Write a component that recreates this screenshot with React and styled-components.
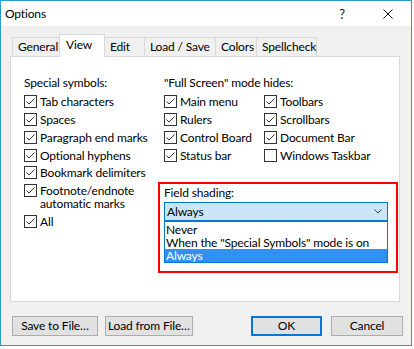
import React from 'react';
import styled, { createGlobalStyle, css } from 'styled-components';

const Global = createGlobalStyle`
  html, body { margin: 0; padding: 0; background: #fff; }
  body { font-family: Lato, "Liberation Sans", sans-serif; font-size: 12px; letter-spacing: -0.15px; color: #000; }
  * { box-sizing: border-box; }
`;

const Window = styled.div`
  width: 412px;
  height: 346px;
  border: 1px solid #2b9bc8;
  display: flex;
  flex-direction: column;
  background: #f0f0f0;
`;

const TitleBar = styled.div`
  height: 25px;
  background: #fff;
  display: flex;
  align-items: center;
  padding-left: 4px;
`;

const Title = styled.div`
  flex: 1;
  line-height: 16px;
`;

const TitleButton = styled.div`
  width: 46px;
  height: 25px;
  display: flex;
  align-items: center;
  justify-content: center;
  font-size: 13px;
  color: #111;
`;

const Body = styled.div`
  flex: 1;
  padding: 8px 11px 0 9px;
  display: flex;
  flex-direction: column;
`;

const TabStrip = styled.div`
  display: flex;
  align-items: flex-end;
  height: 22px;
  padding-left: 2px;
`;

const Tab = styled.div`
  width: ${p => p.w}px;
  height: 19px;
  border-left: 1px solid #d9d9d9;
  border-top: 1px solid #d9d9d9;
  ${p => p.last && css`border-right: 1px solid #d9d9d9;`}
  background: #f0f0f0;
  padding: 1px 0 0 5px;
  line-height: 16px;
  white-space: nowrap;
  ${p => p.active && css`
    position: relative;
    z-index: 1;
    height: 23px;
    margin: 0 -1px -1px -2px;
    border-right: 1px solid #d9d9d9;
    background: #fff;
    padding: 2px 0 0 6px;
  `}
`;

const Panel = styled.div`
  height: 246px;
  background: #fff;
  border: 1px solid #d9d9d9;
  padding: 18px 0 0 13px;
  display: grid;
  grid-template-columns: 140px 1fr;
  align-items: start;
`;

const Column = styled.div`
  display: flex;
  flex-direction: column;
`;

const GroupLabel = styled.div`
  line-height: 16px;
  margin-bottom: 2px;
  white-space: nowrap;
`;

const TwoCols = styled.div`
  display: grid;
  grid-template-columns: 100px 100px;
`;

const Row = styled.div`
  display: flex;
  align-items: flex-start;
  gap: 3px;
  padding: 2.375px 0;
  line-height: 13px;
  white-space: nowrap;
`;

const Box = styled.div`
  width: 13px;
  height: 13px;
  flex-shrink: 0;
  border: 1px solid #333;
  background: #fff;
  display: flex;
  align-items: center;
  justify-content: center;
`;

const FieldBox = styled.div`
  margin: 18px 0 0 -6px;
  width: 240px;
  border: 2px solid #f00;
  padding: 1px 8px 8px 4px;
`;

const FieldLabel = styled.div`
  line-height: 16px;
  margin-bottom: 1px;
`;

const Combo = styled.div`
  height: 19px;
  border: 1px solid #0078d7;
  background: #cce4f7;
  display: flex;
  align-items: center;
  justify-content: space-between;
  padding: 0 5px 0 2px;
  line-height: 17px;
`;

const List = styled.div`
  border: 1px solid #0078d7;
  background: #fff;
  padding-top: 1px;
`;

const Item = styled.div`
  line-height: 13px;
  height: 13px;
  padding-left: 1px;
  white-space: nowrap;
  ${p => p.selected && css`
    background: #3390f0;
    color: #fff;
  `}
`;

const ButtonRow = styled.div`
  display: flex;
  margin: 14px -3px 0 2px;
  gap: 7px;
`;

const Spacer = styled.div`
  flex: 1;
`;

const Button = styled.div`
  width: ${p => p.w}px;
  height: 20px;
  background: #e1e1e1;
  border: 1px solid #adadad;
  display: flex;
  align-items: center;
  justify-content: center;
  line-height: 16px;
  white-space: nowrap;
  ${p => p.primary && css`border: 2px solid #0078d7;`}
  ${p => p.gapLeft && css`margin-left: ${p.gapLeft}px;`}
`;

function Check({ checked, children }) {
  return (
    <Row>
      <Box>
        {checked && (
          <svg width="11" height="11" viewBox="0 0 11 11">
            <polyline points="1.5,5.5 4,8 9.5,2.5" fill="none" stroke="#333" strokeWidth="1" />
          </svg>
        )}
      </Box>
      <span>{children}</span>
    </Row>
  );
}

export default function App() {
  return (
    <>
      <Global />
      <Window>
        <TitleBar>
          <Title>Options</Title>
          <TitleButton>?</TitleButton>
          <TitleButton>
            <svg width="10" height="10" viewBox="0 0 10 10">
              <path d="M0.5 0.5 L9.5 9.5 M9.5 0.5 L0.5 9.5" stroke="#111" strokeWidth="1" fill="none" />
            </svg>
          </TitleButton>
        </TitleBar>
        <Body>
          <TabStrip>
            <Tab w={49}>General</Tab>
            <Tab w={46} active>View</Tab>
            <Tab w={40}>Edit</Tab>
            <Tab w={71}>Load / Save</Tab>
            <Tab w={41}>Colors</Tab>
            <Tab w={61} last>Spellcheck</Tab>
          </TabStrip>
          <Panel>
            <Column>
              <GroupLabel>Special symbols:</GroupLabel>
              <Check checked>Tab characters</Check>
              <Check checked>Spaces</Check>
              <Check checked>Paragraph end marks</Check>
              <Check checked>Optional hyphens</Check>
              <Check checked>Bookmark delimiters</Check>
              <Check checked>Footnote/endnote<br />automatic marks</Check>
              <Check checked>All</Check>
            </Column>
            <Column>
              <GroupLabel>"Full Screen" mode hides:</GroupLabel>
              <TwoCols>
                <Check checked>Main menu</Check>
                <Check checked>Toolbars</Check>
                <Check checked>Rulers</Check>
                <Check checked>Scrollbars</Check>
                <Check checked>Control Board</Check>
                <Check checked>Document Bar</Check>
                <Check checked>Status bar</Check>
                <Check>Windows Taskbar</Check>
              </TwoCols>
              <FieldBox>
                <FieldLabel>Field shading:</FieldLabel>
                <Combo>
                  <span>Always</span>
                  <svg width="8" height="5" viewBox="0 0 8 5">
                    <polyline points="0.5,0.5 4,4 7.5,0.5" fill="none" stroke="#444" strokeWidth="1" />
                  </svg>
                </Combo>
                <List>
                  <Item>Never</Item>
                  <Item>When the "Special Symbols" mode is on</Item>
                  <Item selected>Always</Item>
                </List>
              </FieldBox>
            </Column>
          </Panel>
          <ButtonRow>
            <Button w={86}>Save to File…</Button>
            <Button w={88}>Load from File…</Button>
            <Spacer />
            <Button w={71} primary>OK</Button>
            <Button w={72} gapLeft={2}>Cancel</Button>
          </ButtonRow>
        </Body>
      </Window>
    </>
  );
}
